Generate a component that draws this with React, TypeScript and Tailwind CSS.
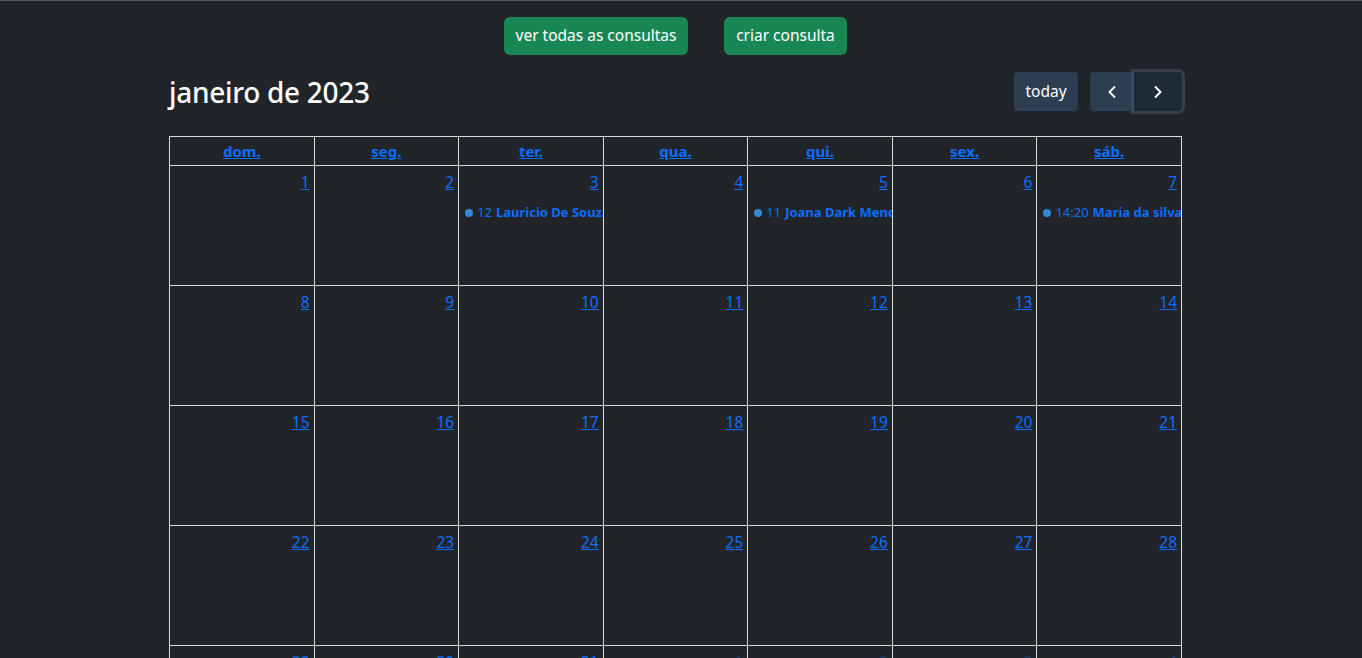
import React from "react";
import { ChevronLeft, ChevronRight } from "lucide-react";

type Ev = { time: string; title: string };

const weekDays = ["dom.", "seg.", "ter.", "qua.", "qui.", "sex.", "sáb."];

const events: Record<number, Ev> = {
  3: { time: "12", title: "Lauricio De Souza" },
  5: { time: "11", title: "Joana Dark Mendes" },
  7: { time: "14:20", title: "Maria da silva" },
};

const weeks: { day: number; other?: boolean }[][] = [
  [1, 2, 3, 4, 5, 6, 7].map((d) => ({ day: d })),
  [8, 9, 10, 11, 12, 13, 14].map((d) => ({ day: d })),
  [15, 16, 17, 18, 19, 20, 21].map((d) => ({ day: d })),
  [22, 23, 24, 25, 26, 27, 28].map((d) => ({ day: d })),
  [
    { day: 29 },
    { day: 30 },
    { day: 31 },
    { day: 1, other: true },
    { day: 2, other: true },
    { day: 3, other: true },
    { day: 4, other: true },
  ],
  [5, 6, 7, 8, 9, 10, 11].map((d) => ({ day: d, other: true })),
];

const App = () => {
  return (
    <div className="min-h-screen bg-[#212529] border-t border-[#575757] font-['Noto_Sans',sans-serif] text-white">
      <div className="ml-[169px] w-[1013px] pb-6">
        <div className="flex flex-row justify-center gap-[36px] pt-[16px]">
          <button className="bg-[#198754] text-white text-[15.5px] rounded-[6px] h-[38px] w-[184px]">
            ver todas as consultas
          </button>
          <button className="bg-[#198754] text-white text-[15.5px] rounded-[6px] h-[38px] w-[123px]">
            criar consulta
          </button>
        </div>

        <div className="flex flex-row justify-between items-center mt-[17px] mb-[25px]">
          <h2 className="text-[28px] font-medium leading-none tracking-[-0.3px]">
            janeiro de 2023
          </h2>
          <div className="flex flex-row items-center gap-[12px]">
            <button className="bg-[#2c3e50] text-white text-[15.5px] rounded-[4px] h-[39px] w-[64px]">
              today
            </button>
            <div className="flex flex-row">
              <button className="bg-[#2c3e50] h-[39px] w-[44px] rounded-l-[4px] flex items-center justify-center">
                <ChevronLeft size={20} strokeWidth={2.2} />
              </button>
              <button className="bg-[#1e2b37] h-[39px] w-[48px] rounded-r-[4px] flex items-center justify-center outline-[3px] outline-[rgba(76,91,106,0.5)]">
                <ChevronRight size={20} strokeWidth={2.2} />
              </button>
            </div>
          </div>
        </div>

        <table className="w-full table-fixed border-collapse">
          <thead>
            <tr>
              {weekDays.map((w) => (
                <th key={w} className="border border-[#dddddd] h-[29px] p-0 align-middle">
                  <a className="text-[#0d6efd] underline font-bold text-[15px]">{w}</a>
                </th>
              ))}
            </tr>
          </thead>
          <tbody>
            {weeks.map((week, i) => (
              <tr key={i}>
                {week.map((c, j) => {
                  const ev = !c.other ? events[c.day] : undefined;
                  return (
                    <td key={j} className="border border-[#dddddd] h-[120px] p-0 align-top">
                      <div className={`flex flex-col h-full ${c.other ? "opacity-30" : ""}`}>
                        <div className="flex justify-end px-[4px] pt-[5px]">
                          <a className="text-[#0d6efd] underline text-[15.5px] leading-[22px]">
                            {c.day}
                          </a>
                        </div>
                        {ev && (
                          <div className="flex flex-row items-center gap-[4px] pl-[6px] mt-[10px] overflow-hidden whitespace-nowrap text-[13px] text-[#0d6efd]">
                            <span className="shrink-0 w-[8px] h-[8px] rounded-full bg-[#3788d8]" />
                            <span className="shrink-0">{ev.time}</span>
                            <span className="font-bold">{ev.title}</span>
                          </div>
                        )}
                      </div>
                    </td>
                  );
                })}
              </tr>
            ))}
          </tbody>
        </table>
      </div>
    </div>
  );
};

export default App;
